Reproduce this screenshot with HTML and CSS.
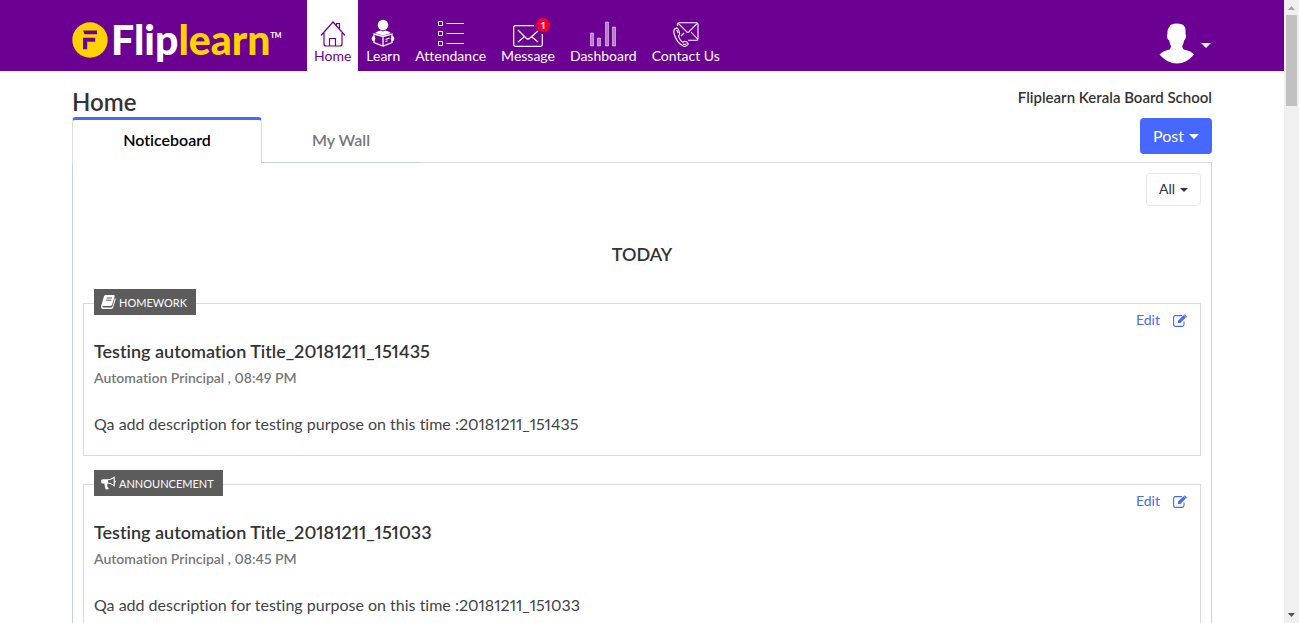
FILE: index.html
```html
<!DOCTYPE html>
<html lang="en">
<head>
<meta charset="utf-8">
<title>Fliplearn - Home</title>
<link rel="stylesheet" href="styles.css">
</head>
<body>
<div class="window">
  <div class="page">
    <header class="topbar">
      <div class="container topbar-row">
        <a class="logo" href="#">
          <svg class="logo-mark" width="36" height="36" viewBox="0 0 36 36" aria-hidden="true">
            <circle cx="18" cy="18" r="17.7" fill="#ffd200"/>
            <path d="M11 8.500h14v3.800H12.500zM11 15.700h12.200v4h-8v7.500H11z" fill="#6c0092"/>
          </svg>
          <span class="logo-text">Flip<span class="logo-accent">learn</span></span><span class="logo-tm">TM</span>
        </a>
        <nav class="nav">
          <a class="nav-item active" href="#">
            <svg width="26" height="26" viewBox="0 0 26 26" fill="none" stroke="currentColor" stroke-width="1.200"><path d="M1 14.500L13 1l12 13.500M4 12v11q0 2 2 2h14q2 0 2-2V12M9.500 25v-7.500h6V25M16.500 4.500V2.500h3v5"/></svg>
            <span>Home</span>
          </a>
          <a class="nav-item" href="#">
            <svg width="24" height="28" viewBox="0 0 24 28"><circle cx="12" cy="6" r="5.300" fill="currentColor"/><path d="M3 15l9 2.500 9-2.500v8.500L12 27l-9-3.500zM12 17.500V27" fill="none" stroke="currentColor" stroke-width="1.300"/><path d="M4 14q3-2.500 6-2.500l2 1 2-1q3 0 6 2.500l-8 2.500z" fill="currentColor"/><path d="M14.500 20.500l4-1.500M14.500 22.500l2-.7" stroke="currentColor" stroke-width="1.200"/><ellipse cx="2.500" cy="19.500" rx="1.800" ry="2.500" fill="currentColor"/><ellipse cx="21.500" cy="19.500" rx="1.800" ry="2.500" fill="currentColor"/></svg>
            <span>Learn</span>
          </a>
          <a class="nav-item" href="#">
            <svg width="26" height="26" viewBox="0 0 26 26" fill="none" stroke="currentColor"><path d="M.5.500h4v4h-4zM.5 10.500h4v4h-4zM.5 20.500h4v4h-4zM8.500 2.500H26M8.500 12.500H26M8.500 22.500H26"/></svg>
            <span>Attendance</span>
          </a>
          <a class="nav-item" href="#">
            <span class="icon-wrap">
              <svg width="30" height="22" viewBox="0 0 30 22" fill="none" stroke="currentColor" stroke-width="1.200"><path d="M21 .7H2.500Q.7.700.7 2.500v17q0 1.800 1.800 1.800h25q1.800 0 1.800-1.800V9M5 5l8 8q2 2 4 0l8-7M5 17l6-5M25 17l-6-5"/></svg>
              <span class="badge">1</span>
            </span>
            <span>Message</span>
          </a>
          <a class="nav-item" href="#">
            <svg width="26" height="26" viewBox="0 0 26 26" fill="currentColor" fill-opacity=".5" stroke="currentColor" stroke-opacity=".8" stroke-width=".6"><path d="M.5 12h3v13h-3zM7.500 17h3v8h-3zM15.500 1h3v24h-3zM22.500 6h3v19h-3z"/></svg>
            <span>Dashboard</span>
          </a>
          <a class="nav-item" href="#">
            <svg width="26" height="25" viewBox="0 0 26 25" fill="none" stroke="currentColor" stroke-width="1.100"><path d="M4.500 4V2Q4.500.7 6 .7h17.500q1.500 0 1.500 1.300v15q0 1.300-1.500 1.300H15M5 1.200l8.500 8.500q1.300 1 2.600 0L24.500 1.200M11 11l-3 3M18 10l6.500 7M3.500 6Q0 7 1 11.500q2.500 9 9 12.500 3 1.200 5-1.500.5-1.500-1.500-2.700-2-1.200-3.500.5-3-1.500-4.500-6.500 1.500-1 .8-3.300Q5.500 6 3.500 6zM3.500 8q1 .5 1.500 3.200M10 22q2 1.200 3.500-.3"/></svg>
            <span>Contact Us</span>
          </a>
        </nav>
        <button class="user" type="button" aria-label="Account menu">
          <svg width="36" height="41" viewBox="0 0 36 41" fill="#fff"><path d="M10.500 4Q11 .5 17.500.5T25 3q2 1 1.500 8 1 .5.200 4-.7 2-1.700 2.500-.5 4-1.800 5.500 0 2.500 1.500 3.500 8 1.500 10.300 5Q28 40.500 18 40.500T.5 31.500q3-3.500 10-5 1.500-1 1.500-3.500-1.300-1.500-1.700-5.500-1.300-.5-2-2.500-.8-3.500.2-4-.5-5 2-7z"/></svg>
          <span class="caret"></span>
        </button>
      </div>
    </header>

    <main class="container">
      <div class="heading">
        <h1>Home</h1>
        <p class="school">Fliplearn Kerala Board School</p>
      </div>
      <div class="tab-row">
        <a class="tab selected" href="#">Noticeboard</a>
        <a class="tab" href="#">My Wall</a>
        <button class="post" type="button">Post <span class="caret"></span></button>
      </div>
      <section class="panel">
        <div class="filter"><button class="all" type="button">All <span class="caret small"></span></button></div>
        <h2>TODAY</h2>
        <article class="card">
          <span class="tag">
            <svg width="15" height="14" viewBox="0 0 15 14"><path d="M4.500 0H13q1 .2.700 1.300L11 10q-.4 1-1.500 1H2q-.8.200-.6.800.2.700 1 .7h8q.6 0 .9-.8L14 3q1 .5.700 1.500L12 12.700q-.3 1.300-1.700 1.300H2Q.2 13.800 0 12q0-1 .4-2L3 1.300Q3.400.1 4.500 0z" fill="#fff"/><path d="M5.700 3h5.300M5 5.200h5.300" stroke="#5c5c5c"/></svg>
            HOMEWORK
          </span>
          <a class="edit" href="#">Edit
            <svg width="14" height="13" viewBox="0 0 14 13"><path d="M11 7.500v3q0 1.900-1.900 1.900H2.500Q.6 12.400.6 10.500v-7Q.6 1.600 2.500 1.600H9" fill="none" stroke="currentColor" stroke-width="1.100"/><path d="M5 6.800L10.500 1.300l2.300 2.300L7.300 9.100H5zM11.200.7q.6-.6 1.200 0l1.200 1.200q.5.500 0 1.100l-.4.400L10.800 1.100z" fill="currentColor"/></svg>
          </a>
          <h3>Testing automation Title_20181211_151435</h3>
          <p class="author">Automation Principal , 08:49 PM</p>
          <p class="text">Qa add description for testing purpose on this time :20181211_151435</p>
        </article>
        <article class="card">
          <span class="tag">
            <svg width="15" height="14" viewBox="0 0 15 14"><path d="M13.800.3v10.400Q10.500 8 7 7.600q-1 .4-.7 1.400-.6 1 .3 1.700-.3.800 1.300 1.800-1 1.500-3.300.8Q3.300 10.500 3.500 7.500H1.600Q.3 7.500.2 6.200V4.600Q.3 3.400 1.600 3.300H6Q10 3.300 13.800.3z" fill="#fff"/><path d="M12.700 2.300Q10 4.200 7 4.300v2.200q3 .3 5.700 2.200z" fill="#5c5c5c"/><path d="M13.500 4.200q1.400.2 1.400 1.300t-1.400 1.300z" fill="#fff"/></svg>
            ANNOUNCEMENT
          </span>
          <a class="edit" href="#">Edit
            <svg width="14" height="13" viewBox="0 0 14 13"><path d="M11 7.500v3q0 1.900-1.900 1.900H2.500Q.6 12.400.6 10.500v-7Q.6 1.600 2.500 1.600H9" fill="none" stroke="currentColor" stroke-width="1.100"/><path d="M5 6.800L10.500 1.300l2.300 2.300L7.300 9.100H5zM11.200.7q.6-.6 1.200 0l1.200 1.200q.5.500 0 1.100l-.4.400L10.800 1.100z" fill="currentColor"/></svg>
          </a>
          <h3>Testing automation Title_20181211_151033</h3>
          <p class="author">Automation Principal , 08:45 PM</p>
          <p class="text">Qa add description for testing purpose on this time :20181211_151033</p>
        </article>
      </section>
    </main>
  </div>
  <div class="scrollbar" aria-hidden="true">
    <svg width="15" height="15" viewBox="0 0 15 15"><path d="M7.500 6L11 10H4z" fill="#a3a3a3"/></svg>
    <div class="thumb"></div>
    <svg class="down" width="15" height="15" viewBox="0 0 15 15"><path d="M4 5h7L7.500 9z" fill="#505050"/></svg>
  </div>
</div>
</body>
</html>
```
FILE: styles.css
```css
* { box-sizing: border-box; }
body { margin: 0; font-family: Lato, "Liberation Sans", sans-serif; font-size: 16px; font-variant-ligatures: none; font-variant-numeric: proportional-nums; color: #333; background: #fff; }
h1, h2, h3, p { margin: 0; }
a { text-decoration: none; color: inherit; }
button { font: inherit; cursor: pointer; }
svg { display: block; flex: none; }

.window { display: flex; height: 100vh; overflow: hidden; }
.page { flex: 1; min-width: 0; overflow: hidden; }
.container { max-width: 1140px; margin: 0 auto; }

.topbar { background: #6c0092; color: #fff; }
.topbar-row { display: flex; height: 71px; }
.logo { display: flex; align-items: flex-start; width: 235px; padding-top: 22px; }
.logo-text { margin-left: 3px; font-size: 41px; line-height: 36px; font-weight: 900; }
.logo-accent { color: #ffd200; }
.logo-tm { padding-top: 8px; font-size: 7px; line-height: 10px; font-weight: 900; }

.nav { display: flex; gap: 1px; }
.nav-item { display: flex; flex-direction: column; align-items: center; justify-content: flex-end; padding: 0 7px 7px; font-size: 14px; line-height: 17px; }
.nav-item.active { background: #fff; color: #6c0092; }
.icon-wrap { position: relative; }
.badge { position: absolute; top: -7px; right: -7px; width: 14px; height: 14px; border-radius: 50%; background: #f00032; font-size: 10px; line-height: 14px; font-weight: 700; text-align: center; }

.user { display: flex; align-items: center; gap: 6px; margin-left: auto; padding: 16px 1px 0 0; border: 0; background: none; color: #fff; }
.caret { display: inline-block; margin-top: 3px; border: 5px solid transparent; border-top-color: currentColor; border-bottom: 0; }
.caret.small { border-width: 4px; border-bottom: 0; }

.heading { display: flex; justify-content: space-between; align-items: flex-start; padding-top: 16px; }
h1 { font-size: 24px; line-height: 30px; font-weight: 600; }
.school { font-size: 15px; line-height: 20px; font-weight: 600; }

.tab-row { position: relative; display: flex; align-items: flex-start; margin-bottom: -1px; }
.tab { width: 158px; height: 46px; padding-top: 3px; border-bottom: 1px solid #bfd3e2; line-height: 40px; font-weight: 600; text-align: center; color: #777; }
.tab.selected { width: 190px; padding-top: 0; border: 1px solid #ddd; border-top: 3px solid #4668ff; border-bottom: 0; border-radius: 4px 4px 0 0; background: #fff; color: #000; }
.post { display: flex; align-items: center; gap: 5px; height: 36px; margin: 1px 0 0 auto; padding: 0 13px 2px; border: 0; border-radius: 4px; background: #4668ff; color: #fff; }

.panel { padding: 10px; border: 1px solid #c5d5e2; border-top-color: #ddd; }
.filter { display: flex; justify-content: flex-end; }
.all { display: flex; align-items: center; gap: 5px; height: 33px; padding: 0 12px 2px; border: 1px solid #e7e7e7; border-radius: 4px; background: #fff; color: #333; font-size: 14px; }
h2 { margin: 36px 0 37px; font-size: 18px; line-height: 24px; font-weight: 600; text-align: center; }

.card { position: relative; margin-bottom: 28px; padding: 6px 10px 19px; border: 1px solid #d9d9d9; }
.tag { position: absolute; top: -15px; left: 10px; display: flex; align-items: center; gap: 3px; height: 26px; padding: 0 9px 0 7px; background: #5c5c5c; color: #fff; font-size: 11px; }
.edit { display: flex; justify-content: flex-end; align-items: center; gap: 13px; padding-right: 3px; font-size: 14px; line-height: 20px; color: #4668ff; }
h3 { margin-top: 9px; font-size: 18px; line-height: 24px; font-weight: 600; }
.author { margin-top: 5px; font-size: 14px; line-height: 20px; font-weight: 600; color: #777; }
.text { margin-top: 24px; line-height: 24px; color: #444; }

.scrollbar { display: flex; flex-direction: column; width: 15px; background: #f0f0f0; }
.thumb { height: 91px; margin: 0 2px; background: #c1c1c1; }
.down { margin-top: auto; }
```
